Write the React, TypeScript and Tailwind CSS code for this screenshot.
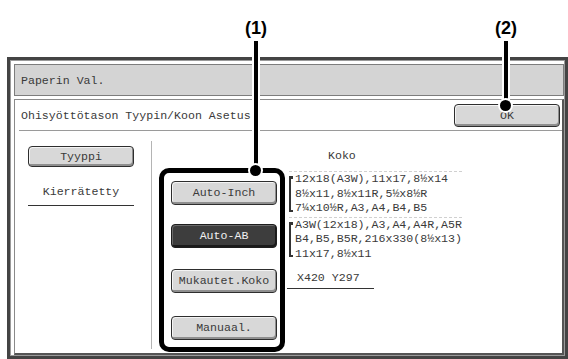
import React from "react";

const btn =
  "flex items-center justify-center w-[106px] rounded-[4px] border border-[#2e2e2e] bg-[#d8d8d8] text-[#3a3a3a] shadow-[inset_-1px_-2px_0_#8f8f8f,inset_1px_1px_0_#f4f4f4]";
const btnDark =
  "flex items-center justify-center w-[106px] rounded-[4px] border border-[#1e1e1e] bg-[#3d3d3d] text-[#f0f0f0] shadow-[inset_-1px_-2px_0_#1a1a1a,inset_1px_1px_0_#6a6a6a]";

function Bracketed({ lines }: { lines: string[] }) {
  return (
    <div className="flex items-stretch border-t border-dashed border-[#d0d0d0]">
      <div className="w-[4px] mt-[4px] mb-[4px] border-l-2 border-t-[3px] border-b-2 border-[#333]" />
      <div className="pl-[2px] leading-[14.5px]">
        {lines.map((l) => (
          <div key={l} className="whitespace-pre">
            {l}
          </div>
        ))}
      </div>
    </div>
  );
}

export default function App() {
  return (
    <div className="relative w-[568px] h-[359px] overflow-hidden bg-white font-['Liberation_Mono',monospace] text-[11.6px] text-[#3a3a3a]">
      {/* window */}
      <div className="ml-[7px] mt-[57px] w-[561px] h-[302px] border-[3px] border-[#444]">
        <div className="h-full border border-[#9a9a9a] pl-[3px] pt-[3px] flex flex-col gap-[3px] bg-white">
          {/* title bar */}
          <div className="h-[32px] flex items-center pl-[6px] pt-[2px] bg-[#d4d4d4] border border-[#7d7d7d] leading-[14px]">
            Paperin Val.
          </div>
          {/* panel */}
          <div className="flex-1 flex flex-col bg-white border-l border-t border-[#8a8a8a] border-r-2 border-b-2 border-r-[#555] border-b-[#555]">
            {/* header */}
            <div className="ml-[4px] h-[31px] flex items-center justify-between border-b border-[#9a9a9a] pl-[2px] pr-[2px]">
              <span className="leading-[14px] mt-[2px]">Ohisyöttötason Tyypin/Koon Asetus</span>
              <div className={btn + " w-[105px] h-[23px] leading-[14px] mt-[1px]"}>OK</div>
            </div>
            {/* body */}
            <div className="flex-1 flex">
              {/* left column */}
              <div className="w-[136px] pl-[13px] pt-[15px] flex flex-col">
                <div className={btn + " h-[21px] leading-[14px]"}>Tyyppi</div>
                <div className="mt-[18px] w-[106px] text-center leading-[14px] pb-[6px] border-b border-[#333]">
                  Kierrätetty
                </div>
              </div>
              {/* divider */}
              <div className="w-px bg-[#b4b4b4] mt-[10px] mb-[4px]" />
              {/* box (1) */}
              <div className="ml-[7px] mt-[37px] w-[126px] h-[184px] border-[5px] border-black rounded-[10px] pl-[7px] flex flex-col">
                <div className={btn + " h-[24px] mt-[8px] leading-[14px]"}>Auto-Inch</div>
                <div className={btnDark + " h-[24px] mt-[19px] leading-[14px]"}>Auto-AB</div>
                <div className={btn + " h-[24px] mt-[21px] leading-[14px]"}>Mukautet.Koko</div>
                <div className={btn + " h-[24px] mt-[23px] leading-[14px]"}>Manuaal.</div>
              </div>
              {/* right column */}
              <div className="pl-[4px] flex flex-col">
                <div className="mt-[18px] pl-[39px] leading-[14px]">Koko</div>
                <div className="mt-[8px]">
                  <Bracketed
                    lines={["12x18(A3W),11x17,8½x14", "8½x11,8½x11R,5½x8½R", "7¼x10½R,A3,A4,B4,B5"]}
                  />
                </div>
                <div className="mt-[1px]">
                  <Bracketed
                    lines={["A3W(12x18),A3,A4,A4R,A5R", "B4,B5,B5R,216x330(8½x13)", "11x17,8½x11"]}
                  />
                </div>
                <div className="mt-[10px] ml-[-2px] w-[87px] border-b border-[#333] pl-[10px] pb-[3px] leading-[14px]">
                  X420 Y297
                </div>
              </div>
            </div>
          </div>
        </div>
      </div>

      {/* annotation (1) */}
      <div className="absolute left-[242px] top-[17px] w-[28px] text-center font-['Liberation_Sans',sans-serif] font-bold text-[18px] leading-[22px] text-black">
        (1)
      </div>
      <div className="absolute left-[252px] top-[41px] w-[8px] h-[130px] bg-white flex justify-center">
        <div className="w-[4px] h-full bg-black" />
      </div>
      <div className="absolute left-[250px] top-[165px] w-[11px] h-[11px] rounded-full bg-black ring-2 ring-white" />

      {/* annotation (2) */}
      <div className="absolute left-[492px] top-[17px] w-[28px] text-center font-['Liberation_Sans',sans-serif] font-bold text-[18px] leading-[22px] text-black">
        (2)
      </div>
      <div className="absolute left-[502px] top-[41px] w-[8px] h-[65px] bg-white flex justify-center">
        <div className="w-[4px] h-full bg-black" />
      </div>
      <div className="absolute left-[500px] top-[100px] w-[11px] h-[11px] rounded-full bg-black ring-2 ring-white" />
    </div>
  );
}
